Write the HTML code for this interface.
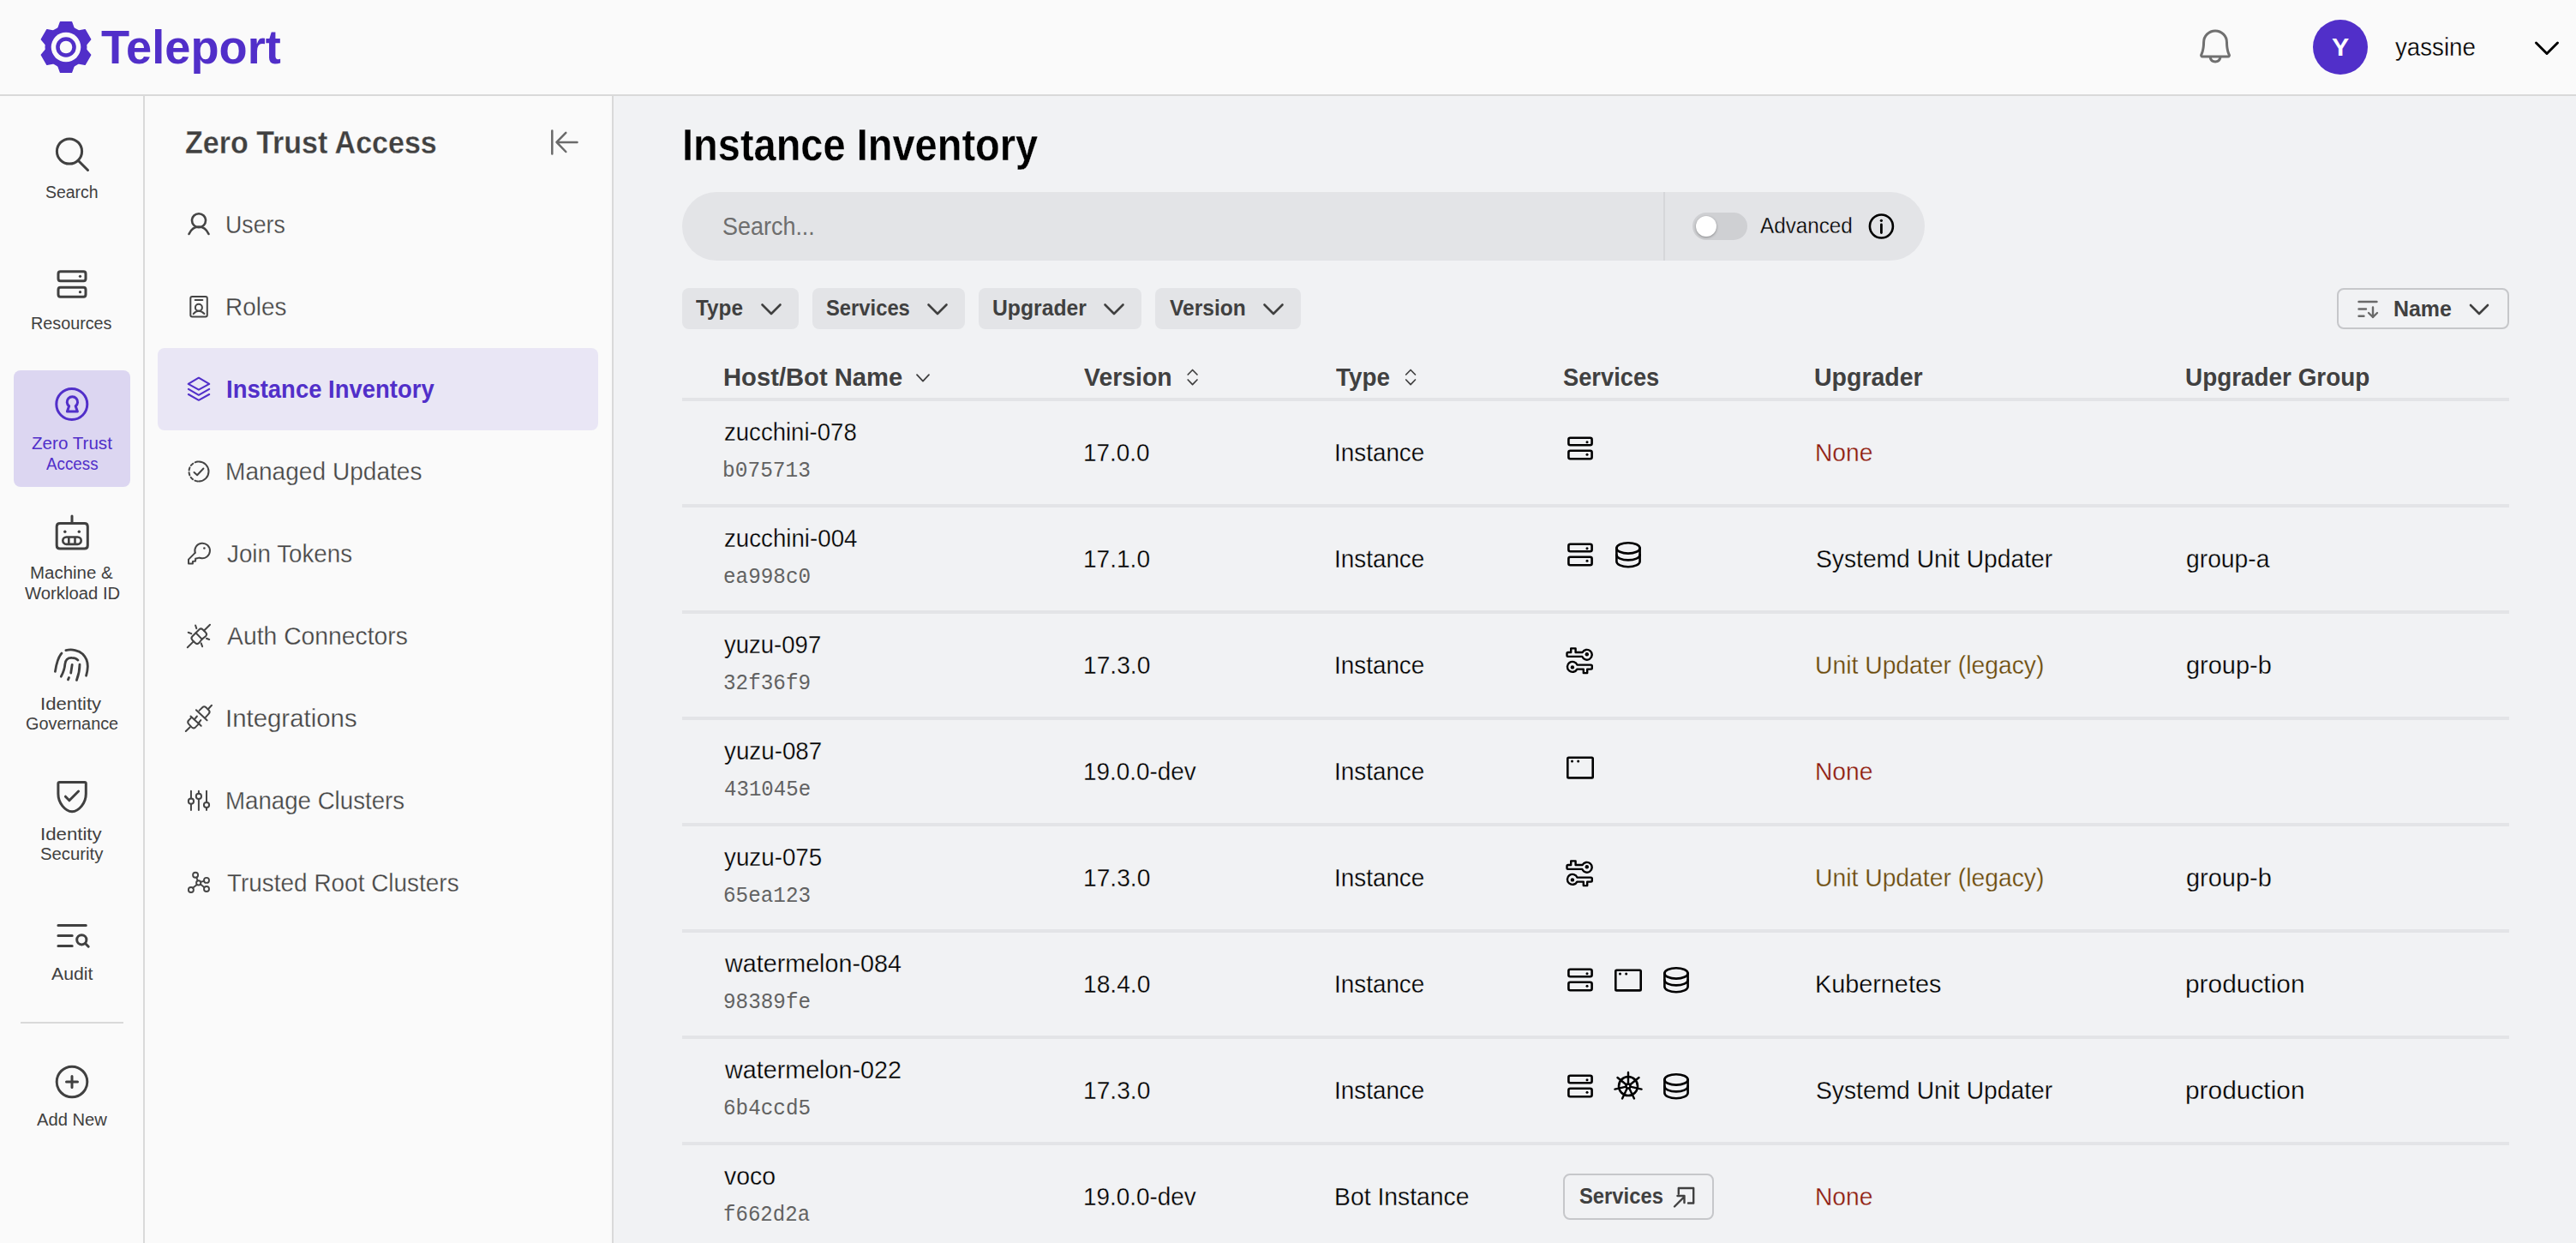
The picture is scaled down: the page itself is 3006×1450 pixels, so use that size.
<!DOCTYPE html>
<html><head><meta charset="utf-8"><title>Instance Inventory</title>
<style>
html,body{margin:0;padding:0;width:3006px;height:1450px;overflow:hidden;background:#F1F2F4;font-family:"Liberation Sans",sans-serif;}
.a{position:absolute;box-sizing:border-box;}
.t{position:absolute;white-space:nowrap;line-height:1;transform-origin:0 0;}
svg.i{position:absolute;overflow:visible;}
</style></head><body>
<div class="a" style="left:0px;top:0px;width:3006px;height:110px;background:#FAFAFA;"></div>
<div class="a" style="left:0px;top:110px;width:3006px;height:2px;background:#D9D9D9;"></div>
<div class="a" style="left:0px;top:112px;width:167px;height:1338px;background:#FAFAFA;"></div>
<div class="a" style="left:167px;top:112px;width:2px;height:1338px;background:#D9D9D9;"></div>
<div class="a" style="left:169px;top:112px;width:545px;height:1338px;background:#FAFAFA;"></div>
<div class="a" style="left:714px;top:112px;width:2px;height:1338px;background:#D9D9D9;"></div>
<div class="a" style="left:16px;top:432px;width:136px;height:136px;background:#DCD6F1;border-radius:8px;"></div>
<div class="a" style="left:24px;top:1192px;width:120px;height:2px;background:#D9D9D9;"></div>
<div class="a" style="left:184px;top:406px;width:514px;height:96px;background:#E9E6F5;border-radius:8px;"></div>
<div class="a" style="left:796px;top:224px;width:1450px;height:80px;background:#E3E4E7;border-radius:40px;"></div>
<div class="a" style="left:1941px;top:224px;width:2px;height:80px;background:#D6D7DA;"></div>
<div class="a" style="left:1975px;top:248px;width:64px;height:32px;background:#CFD0D3;border-radius:16px;"></div>
<div class="a" style="left:1979px;top:252px;width:24px;height:24px;background:#FFFFFF;border-radius:50%;box-shadow:0 1px 3px rgba(0,0,0,0.35);"></div>
<div class="a" style="left:796px;top:336px;width:136px;height:48px;background:#E3E4E7;border-radius:8px;"></div>
<div class="a" style="left:948px;top:336px;width:178px;height:48px;background:#E3E4E7;border-radius:8px;"></div>
<div class="a" style="left:1142px;top:336px;width:190px;height:48px;background:#E3E4E7;border-radius:8px;"></div>
<div class="a" style="left:1348px;top:336px;width:170px;height:48px;background:#E3E4E7;border-radius:8px;"></div>
<div class="a" style="left:2727px;top:336px;width:201px;height:48px;background:transparent;border:2px solid #C6C7CA;border-radius:8px;"></div>
<div class="a" style="left:796px;top:464px;width:2132px;height:4px;background:#E3E4E7;"></div>
<div class="a" style="left:796px;top:588px;width:2132px;height:4px;background:#E3E4E7;"></div>
<div class="a" style="left:796px;top:712px;width:2132px;height:4px;background:#E3E4E7;"></div>
<div class="a" style="left:796px;top:836px;width:2132px;height:4px;background:#E3E4E7;"></div>
<div class="a" style="left:796px;top:960px;width:2132px;height:4px;background:#E3E4E7;"></div>
<div class="a" style="left:796px;top:1084px;width:2132px;height:4px;background:#E3E4E7;"></div>
<div class="a" style="left:796px;top:1208px;width:2132px;height:4px;background:#E3E4E7;"></div>
<div class="a" style="left:796px;top:1332px;width:2132px;height:4px;background:#E3E4E7;"></div>
<div class="a" style="left:1824px;top:1369px;width:176px;height:54px;background:transparent;border:2px solid #C6C7CA;border-radius:8px;"></div>
<div class="a" style="left:2699px;top:22.7px;width:64px;height:64px;background:#512FC9;border-radius:50%;"></div>
<svg class="i" style="left:0;top:0" width="3006" height="1450" viewBox="0 0 3006 1450">
<path d="M67.82,33.37 L70.51,25.71 L83.49,25.71 L86.18,33.37 Z M91.14,36.23 L99.12,34.73 L105.61,45.98 L100.32,52.14 Z M100.32,57.86 L105.61,64.02 L99.12,75.27 L91.14,73.77 Z M86.18,76.63 L83.49,84.29 L70.51,84.29 L67.82,76.63 Z M62.86,73.77 L54.88,75.27 L48.39,64.02 L53.68,57.86 Z M53.68,52.14 L48.39,45.98 L54.88,34.73 L62.86,36.23 Z " fill="#512FC9" stroke="#512FC9" stroke-width="1.5" stroke-linecap="round" stroke-linejoin="round" />
<circle cx="77" cy="55" r="24.5" fill="#512FC9" stroke="none" stroke-width="0"/>
<circle cx="77" cy="55" r="17.3" fill="#FAFAFA" stroke="none" stroke-width="0"/>
<circle cx="77" cy="55" r="11.8" fill="#512FC9" stroke="none" stroke-width="0"/>
<circle cx="77" cy="55" r="7.3" fill="#FAFAFA" stroke="none" stroke-width="0"/>
<path transform="translate(2561.1,30.0) scale(0.187)" fill="#707070" d="M221.8,175.94C216.25,166.38,208,139.33,208,104a80,80,0,1,0-160,0c0,35.35-8.26,62.38-13.81,71.94A16,16,0,0,0,48,200H88.81a40,40,0,0,0,78.38,0H208a16,16,0,0,0,13.8-24.06ZM128,216a24,24,0,0,1-22.62-16h45.24A24,24,0,0,1,128,216ZM48,184c7.7-13.24,16-43.92,16-80a64,64,0,1,1,128,0c0,36.05,8.28,66.73,16,80Z"/>
<path d="M2959.5,50 L2972,62.5 L2984.5,50" fill="none" stroke="#000" stroke-width="3" stroke-linecap="round" stroke-linejoin="round" />
<circle cx="81" cy="176.5" r="14.6" fill="none" stroke="#404040" stroke-width="3"/>
<path d="M91.5,187.5 L102.5,198.5" fill="none" stroke="#404040" stroke-width="3" stroke-linecap="round" stroke-linejoin="round" />
<path d="M68,319.5 Q68,316.8 70.5,316.8 L97.5,316.8 Q100,316.8 100,319.5 L100,325 Q100,327.7 97.5,327.7 L70.5,327.7 Q68,327.7 68,325 Z" fill="none" stroke="#404040" stroke-width="3" stroke-linecap="round" stroke-linejoin="round" />
<path d="M68,338 Q68,335.2 70.5,335.2 L97.5,335.2 Q100,335.2 100,338 L100,343.5 Q100,346.2 97.5,346.2 L70.5,346.2 Q68,346.2 68,343.5 Z" fill="none" stroke="#404040" stroke-width="3" stroke-linecap="round" stroke-linejoin="round" />
<circle cx="93.5" cy="322.3" r="1.6" fill="#404040" stroke="none" stroke-width="0"/>
<circle cx="93.5" cy="340.7" r="1.6" fill="#404040" stroke="none" stroke-width="0"/>
<circle cx="83.8" cy="471.5" r="18" fill="none" stroke="#512FC9" stroke-width="3"/>
<path d="M80.6,473.8 A6.2,6.2 0 1 1 88.2,473.8 L90.4,480 L78.4,480 Z" fill="none" stroke="#512FC9" stroke-width="3" stroke-linecap="round" stroke-linejoin="round" />
<path d="M84,602 L84,609.5" fill="none" stroke="#404040" stroke-width="3" stroke-linecap="round" stroke-linejoin="round" />
<path d="M70,610.5 L98.5,610.5 Q102.3,610.5 102.3,614.3 L102.3,636.2 Q102.3,640 98.5,640 L70,640 Q66.2,640 66.2,636.2 L66.2,614.3 Q66.2,610.5 70,610.5 Z" fill="none" stroke="#404040" stroke-width="3" stroke-linecap="round" stroke-linejoin="round" />
<circle cx="75.8" cy="620.2" r="1.7" fill="#404040" stroke="none" stroke-width="0"/>
<circle cx="92.3" cy="620.2" r="1.7" fill="#404040" stroke="none" stroke-width="0"/>
<path d="M77.5,626.5 L90.5,626.5 A4.2,4.2 0 0 1 90.5,634.9 L77.5,634.9 A4.2,4.2 0 0 1 77.5,626.5 Z M80.3,626.5 L80.3,634.9 M87.5,626.5 L87.5,634.9" fill="none" stroke="#404040" stroke-width="2.6" stroke-linecap="round" stroke-linejoin="round" />
<path d="M64.4,783.4 C65.5,776 67.5,767 71.9,762.1" fill="none" stroke="#404040" stroke-width="2.8" stroke-linecap="round" stroke-linejoin="round" />
<path d="M76.9,758.6 C84,757 92,758.5 96.5,763 C101,767.5 102.5,773 102.3,778 C102.2,781.5 101.5,785 100.6,788.2" fill="none" stroke="#404040" stroke-width="2.8" stroke-linecap="round" stroke-linejoin="round" />
<path d="M71.3,789.2 C73.5,785 75.5,781 75.8,775 C76,770 79,767 83.8,767.3 C87,767.3 89.5,768.5 91,770.1" fill="none" stroke="#404040" stroke-width="2.8" stroke-linecap="round" stroke-linejoin="round" />
<path d="M84.2,775.3 L82.7,785" fill="none" stroke="#404040" stroke-width="2.8" stroke-linecap="round" stroke-linejoin="round" />
<path d="M93,775.1 C93,782 91.5,788 89.4,793.4" fill="none" stroke="#404040" stroke-width="2.8" stroke-linecap="round" stroke-linejoin="round" />
<path d="M80.5,790.4 L79.4,792.8" fill="none" stroke="#404040" stroke-width="2.8" stroke-linecap="round" stroke-linejoin="round" />
<path d="M69.5,912.5 L98.7,912.5 Q100.3,912.5 100.3,914.1 L100.3,926 C100.3,937 92,946.3 84.1,946.8 C76.2,946.3 67.9,937 67.9,926 L67.9,914.1 Q67.9,912.5 69.5,912.5 Z" fill="none" stroke="#404040" stroke-width="3" stroke-linecap="round" stroke-linejoin="round" />
<path d="M76.4,929.2 L80.9,933.8 L91.6,923" fill="none" stroke="#404040" stroke-width="3" stroke-linecap="round" stroke-linejoin="round" />
<path d="M67.9,1079.6 L100.3,1079.6 M67.9,1091.6 L84.2,1091.6 M67.9,1103.6 L84.2,1103.6" fill="none" stroke="#404040" stroke-width="3" stroke-linecap="round" stroke-linejoin="round" />
<circle cx="95.3" cy="1096.3" r="5.6" fill="none" stroke="#404040" stroke-width="3"/>
<path d="M99.5,1100.5 L103.2,1104.2" fill="none" stroke="#404040" stroke-width="3" stroke-linecap="round" stroke-linejoin="round" />
<circle cx="84" cy="1262" r="17.8" fill="none" stroke="#404040" stroke-width="3"/>
<path d="M84,1255.5 L84,1268.5 M77.5,1262 L90.5,1262" fill="none" stroke="#404040" stroke-width="3" stroke-linecap="round" stroke-linejoin="round" />
<circle cx="232" cy="257.2" r="8" fill="none" stroke="#454545" stroke-width="2.6"/>
<path d="M220.5,273 C223,267.5 227,264.5 232,264.5 C237,264.5 241,267.5 243.5,273" fill="none" stroke="#454545" stroke-width="2.6" stroke-linecap="round" stroke-linejoin="round" />
<path d="M224.3,346.1 L239.8,346.1 Q241.8,346.1 241.8,348.1 L241.8,367.6 Q241.8,369.6 239.8,369.6 L224.3,369.6 Q222.3,369.6 222.3,367.6 L222.3,348.1 Q222.3,346.1 224.3,346.1 Z" fill="none" stroke="#454545" stroke-width="2" stroke-linecap="round" stroke-linejoin="round" />
<path d="M227.7,350 L236.3,350" fill="none" stroke="#454545" stroke-width="2" stroke-linecap="round" stroke-linejoin="round" />
<circle cx="231.9" cy="358.7" r="4" fill="none" stroke="#454545" stroke-width="2"/>
<path d="M225.7,366.2 C227.5,364 229.5,362.8 231.9,362.8 C234.3,362.8 236.5,364 238.4,366" fill="none" stroke="#454545" stroke-width="2" stroke-linecap="round" stroke-linejoin="round" />
<path d="M231.9,440.7 L244.2,447.9 L231.9,454.7 L219.7,447.9 Z" fill="none" stroke="#512FC9" stroke-width="2.1" stroke-linecap="round" stroke-linejoin="round" />
<path d="M219.9,453.9 L231.9,460.8 L244.2,453.9" fill="none" stroke="#512FC9" stroke-width="2.1" stroke-linecap="round" stroke-linejoin="round" />
<path d="M219.9,460 L231.9,466.8 L244.2,460" fill="none" stroke="#512FC9" stroke-width="2.1" stroke-linecap="round" stroke-linejoin="round" />
<path d="M232,538.5 A11.5,11.5 0 0 1 232,561.5" fill="none" stroke="#454545" stroke-width="2" stroke-linecap="round" stroke-linejoin="round" />
<path d="M232,561.5 A11.5,11.5 0 0 1 232,538.5" fill="none" stroke="#454545" stroke-width="2" stroke-linecap="round" stroke-linejoin="round" stroke-dasharray="3.2 2.8" stroke-dashoffset="-1.5"/>
<path d="M226.5,551 L230.1,554.2 L237.4,546.5" fill="none" stroke="#454545" stroke-width="2" stroke-linecap="round" stroke-linejoin="round" />
<path d="M227.7,644.9 L220,652.6 L220,657.6 L224.9,657.6 L224.9,655 L228.1,654.6 L228.1,651.8 L232.5,650.6 L234.1,651" fill="none" stroke="#454545" stroke-width="2" stroke-linecap="round" stroke-linejoin="round" />
<path d="M227.7,644.9 A8.8,8.8 0 1 1 234.1,651" fill="none" stroke="#454545" stroke-width="2" stroke-linecap="round" stroke-linejoin="round" />
<circle cx="238.4" cy="639.5" r="1.3" fill="#454545" stroke="none" stroke-width="0"/>
<path d="M228.5,738.3 L232.3,734.5 Q234.5,732.3 236.7,734.5 L240,737.8 Q242.2,740 240,742.2 L235.7,745.6" fill="none" stroke="#454545" stroke-width="2" stroke-linecap="round" stroke-linejoin="round" />
<path d="M228.5,738.3 L224.5,742.3 Q222.3,744.5 224.5,746.7 L227.8,750 Q230,752.2 232.2,750 L235.7,745.6 Z" fill="none" stroke="#454545" stroke-width="2" stroke-linecap="round" stroke-linejoin="round" />
<path d="M238.2,735.5 L245,728.7 M225.7,748.4 L218.8,755.2" fill="none" stroke="#454545" stroke-width="2" stroke-linecap="round" stroke-linejoin="round" />
<path d="M228.1,729.5 L229.3,733.1 M219.7,737.7 L223.3,739.1 M241,744.8 L244.2,746 M234.7,750.4 L236.1,754.2" fill="none" stroke="#454545" stroke-width="2" stroke-linecap="round" stroke-linejoin="round" />
<path d="M216.8,853 L221.7,848.2 M242.6,827.5 L247,822.8" fill="none" stroke="#454545" stroke-width="2" stroke-linecap="round" stroke-linejoin="round" />
<path d="M222.5,835.5 L234.7,846.8" fill="none" stroke="#454545" stroke-width="2" stroke-linecap="round" stroke-linejoin="round" />
<path d="M223.3,837.1 L220.2,840.2 Q218.2,842.2 220.2,844.6 L223.8,848.4 Q225.8,850.4 228,848.4 L232.5,843.9" fill="none" stroke="#454545" stroke-width="2" stroke-linecap="round" stroke-linejoin="round" />
<path d="M226.9,839.1 L229.9,835.5 M231.5,843.6 L234.3,840.1" fill="none" stroke="#454545" stroke-width="2" stroke-linecap="round" stroke-linejoin="round" />
<path d="M228.9,828.3 L241.6,840.3" fill="none" stroke="#454545" stroke-width="2" stroke-linecap="round" stroke-linejoin="round" />
<path d="M232.5,828.9 L236.2,825.2 Q238.2,823.2 240.4,825.2 L243.6,828.4 Q245.6,830.4 243.6,832.6 L239.8,836.8" fill="none" stroke="#454545" stroke-width="2" stroke-linecap="round" stroke-linejoin="round" />
<path d="M222.95,922.7 L222.95,931.5 M222.95,938 L222.95,945 M231.9,922.7 L231.9,925.6 M231.9,932.2 L231.9,945 M241,922.7 L241,935.7 M241,942.3 L241,945" fill="none" stroke="#454545" stroke-width="2" stroke-linecap="round" stroke-linejoin="round" />
<circle cx="222.95" cy="934.7" r="3.1" fill="none" stroke="#454545" stroke-width="2"/>
<circle cx="231.9" cy="928.9" r="3.1" fill="none" stroke="#454545" stroke-width="2"/>
<circle cx="241" cy="939" r="3.1" fill="none" stroke="#454545" stroke-width="2"/>
<circle cx="228.1" cy="1020.7" r="3" fill="none" stroke="#454545" stroke-width="1.9"/>
<circle cx="241" cy="1026.9" r="3" fill="none" stroke="#454545" stroke-width="1.9"/>
<circle cx="241" cy="1037" r="3" fill="none" stroke="#454545" stroke-width="1.9"/>
<circle cx="222.9" cy="1038" r="3" fill="none" stroke="#454545" stroke-width="1.9"/>
<circle cx="231.7" cy="1029.9" r="2.6" fill="none" stroke="#454545" stroke-width="1.9"/>
<path d="M229.3,1023.5 L230.6,1027.3 M234.3,1028.8 L238.2,1027.6 M234,1031.6 L238.5,1035.2 M229.8,1032 L225,1035.8" fill="none" stroke="#454545" stroke-width="1.9" stroke-linecap="round" stroke-linejoin="round" />
<path d="M644.3,152.5 L644.3,179.5 M673.5,165.9 L650,165.9 M660.3,154.8 L649.5,165.9 L660.3,177" fill="none" stroke="#6A6A6A" stroke-width="2.5" stroke-linecap="round" stroke-linejoin="round" />
<path d="M889.5,355.5 L900,366 L910.5,355.5" fill="none" stroke="#404040" stroke-width="2.6" stroke-linecap="round" stroke-linejoin="round" />
<path d="M1083.5,355.5 L1094,366 L1104.5,355.5" fill="none" stroke="#404040" stroke-width="2.6" stroke-linecap="round" stroke-linejoin="round" />
<path d="M1289.5,355.5 L1300,366 L1310.5,355.5" fill="none" stroke="#404040" stroke-width="2.6" stroke-linecap="round" stroke-linejoin="round" />
<path d="M1475.5,355.5 L1486,366 L1496.5,355.5" fill="none" stroke="#404040" stroke-width="2.6" stroke-linecap="round" stroke-linejoin="round" />
<circle cx="2195.4" cy="264" r="13.5" fill="none" stroke="#000" stroke-width="2.6"/>
<path d="M2195.4,262 L2195.4,271.5" fill="none" stroke="#000" stroke-width="2.8" stroke-linecap="round" stroke-linejoin="round" />
<circle cx="2195.4" cy="257.3" r="1.6" fill="#000" stroke="none" stroke-width="0"/>
<path d="M2752.5,352 L2773.5,352 M2752.5,360.5 L2761,360.5 M2752.5,368.7 L2758.5,368.7 M2769,358.5 L2769,370 M2764,365 L2769,370 L2774,365" fill="none" stroke="#6A6A6A" stroke-width="2.4" stroke-linecap="round" stroke-linejoin="round" />
<path d="M2883,356 L2893,366 L2903,356" fill="none" stroke="#404040" stroke-width="2.6" stroke-linecap="round" stroke-linejoin="round" />
<path d="M1070,437.2 L1077,444.6 L1084,437.2" fill="none" stroke="#404040" stroke-width="1.8" stroke-linecap="round" stroke-linejoin="round" />
<path d="M1386.2,437 L1391.6,431.5 L1397,437 M1386.2,443 L1391.6,448.6 L1397,443" fill="none" stroke="#404040" stroke-width="1.7" stroke-linecap="round" stroke-linejoin="round" />
<path d="M1640.7,437 L1646.1,431.5 L1651.5,437 M1640.7,443 L1646.1,448.6 L1651.5,443" fill="none" stroke="#404040" stroke-width="1.7" stroke-linecap="round" stroke-linejoin="round" />
<path d="M1832.4,510.7 L1855.6,510.7 Q1857.6,510.7 1857.6,512.7 L1857.6,517.3 Q1857.6,519.3 1855.6,519.3 L1832.4,519.3 Q1830.4,519.3 1830.4,517.3 L1830.4,512.7 Q1830.4,510.7 1832.4,510.7 Z" fill="none" stroke="#000" stroke-width="2.6" stroke-linecap="round" stroke-linejoin="round" />
<circle cx="1852" cy="515.8" r="1.5" fill="#000" stroke="none" stroke-width="0"/>
<path d="M1832.4,525.8 L1855.6,525.8 Q1857.6,525.8 1857.6,527.8 L1857.6,533.3 Q1857.6,535.3 1855.6,535.3 L1832.4,535.3 Q1830.4,535.3 1830.4,533.3 L1830.4,527.8 Q1830.4,525.8 1832.4,525.8 Z" fill="none" stroke="#000" stroke-width="2.6" stroke-linecap="round" stroke-linejoin="round" />
<circle cx="1852" cy="530.3" r="1.5" fill="#000" stroke="none" stroke-width="0"/>
<path d="M1832.4,634.7 L1855.6,634.7 Q1857.6,634.7 1857.6,636.7 L1857.6,641.3 Q1857.6,643.3 1855.6,643.3 L1832.4,643.3 Q1830.4,643.3 1830.4,641.3 L1830.4,636.7 Q1830.4,634.7 1832.4,634.7 Z" fill="none" stroke="#000" stroke-width="2.6" stroke-linecap="round" stroke-linejoin="round" />
<circle cx="1852" cy="639.8" r="1.5" fill="#000" stroke="none" stroke-width="0"/>
<path d="M1832.4,649.8 L1855.6,649.8 Q1857.6,649.8 1857.6,651.8 L1857.6,657.3 Q1857.6,659.3 1855.6,659.3 L1832.4,659.3 Q1830.4,659.3 1830.4,657.3 L1830.4,651.8 Q1830.4,649.8 1832.4,649.8 Z" fill="none" stroke="#000" stroke-width="2.6" stroke-linecap="round" stroke-linejoin="round" />
<circle cx="1852" cy="654.3" r="1.5" fill="#000" stroke="none" stroke-width="0"/>
<ellipse cx="1900" cy="639.4" rx="13.6" ry="6.2" fill="none" stroke="#000" stroke-width="2.6"/>
<path d="M1886.4,639.4 L1886.4,655 A13.6,6.2 0 0 0 1913.6,655 L1913.6,639.4" fill="none" stroke="#000" stroke-width="2.6" stroke-linecap="round" stroke-linejoin="round" />
<path d="M1886.4,647.2 A13.6,6.2 0 0 0 1913.6,647.2" fill="none" stroke="#000" stroke-width="2.6" stroke-linecap="round" stroke-linejoin="round" />
<g transform="translate(0,0)">
<path d="M1846.6,761 L1838.6,761 L1838.6,756.4 L1833.2,756.4 L1833.2,761 L1829.8,761 Q1828.5,761 1828.5,762.4 L1828.5,764.6 Q1828.5,765.9 1829.8,765.9 L1846.3,765.9 A5.9,5.9 0 1 0 1846.6,761" fill="none" stroke="#000" stroke-width="2.4" stroke-linecap="round" stroke-linejoin="round" />
<path d="M1840.5,775.6 L1856.5,775.6 Q1857.8,775.6 1857.8,777 L1857.8,779.3 Q1857.8,780.6 1856.5,780.6 L1852.2,780.6 L1852.2,785.1 L1847.8,785.1 L1847.8,780.6 L1840.3,780.6 A6,6 0 1 1 1840.5,775.6" fill="none" stroke="#000" stroke-width="2.4" stroke-linecap="round" stroke-linejoin="round" />
<circle cx="1851.8" cy="763.3" r="2.2" fill="#000" stroke="none" stroke-width="0"/>
<circle cx="1834.9" cy="778.4" r="2.2" fill="#000" stroke="none" stroke-width="0"/>
</g>
<path d="M1830.5,883.8 L1857.5,883.8 Q1858.7,883.8 1858.7,885 L1858.7,906.2 Q1858.7,907.4 1857.5,907.4 L1830.5,907.4 Q1829.3,907.4 1829.3,906.2 L1829.3,885 Q1829.3,883.8 1830.5,883.8 Z" fill="none" stroke="#000" stroke-width="2.6" stroke-linecap="round" stroke-linejoin="round" />
<circle cx="1834.5" cy="888.1" r="1.5" fill="#000" stroke="none" stroke-width="0"/>
<circle cx="1841.7" cy="888.1" r="1.5" fill="#000" stroke="none" stroke-width="0"/>
<g transform="translate(0,248)">
<path d="M1846.6,761 L1838.6,761 L1838.6,756.4 L1833.2,756.4 L1833.2,761 L1829.8,761 Q1828.5,761 1828.5,762.4 L1828.5,764.6 Q1828.5,765.9 1829.8,765.9 L1846.3,765.9 A5.9,5.9 0 1 0 1846.6,761" fill="none" stroke="#000" stroke-width="2.4" stroke-linecap="round" stroke-linejoin="round" />
<path d="M1840.5,775.6 L1856.5,775.6 Q1857.8,775.6 1857.8,777 L1857.8,779.3 Q1857.8,780.6 1856.5,780.6 L1852.2,780.6 L1852.2,785.1 L1847.8,785.1 L1847.8,780.6 L1840.3,780.6 A6,6 0 1 1 1840.5,775.6" fill="none" stroke="#000" stroke-width="2.4" stroke-linecap="round" stroke-linejoin="round" />
<circle cx="1851.8" cy="763.3" r="2.2" fill="#000" stroke="none" stroke-width="0"/>
<circle cx="1834.9" cy="778.4" r="2.2" fill="#000" stroke="none" stroke-width="0"/>
</g>
<path d="M1832.4,1130.7 L1855.6,1130.7 Q1857.6,1130.7 1857.6,1132.7 L1857.6,1137.3 Q1857.6,1139.3 1855.6,1139.3 L1832.4,1139.3 Q1830.4,1139.3 1830.4,1137.3 L1830.4,1132.7 Q1830.4,1130.7 1832.4,1130.7 Z" fill="none" stroke="#000" stroke-width="2.6" stroke-linecap="round" stroke-linejoin="round" />
<circle cx="1852" cy="1135.8" r="1.5" fill="#000" stroke="none" stroke-width="0"/>
<path d="M1832.4,1145.8 L1855.6,1145.8 Q1857.6,1145.8 1857.6,1147.8 L1857.6,1153.3 Q1857.6,1155.3 1855.6,1155.3 L1832.4,1155.3 Q1830.4,1155.3 1830.4,1153.3 L1830.4,1147.8 Q1830.4,1145.8 1832.4,1145.8 Z" fill="none" stroke="#000" stroke-width="2.6" stroke-linecap="round" stroke-linejoin="round" />
<circle cx="1852" cy="1150.3" r="1.5" fill="#000" stroke="none" stroke-width="0"/>
<path d="M1886.5,1131.8 L1913.5,1131.8 Q1914.7,1131.8 1914.7,1133 L1914.7,1154.2 Q1914.7,1155.4 1913.5,1155.4 L1886.5,1155.4 Q1885.3,1155.4 1885.3,1154.2 L1885.3,1133 Q1885.3,1131.8 1886.5,1131.8 Z" fill="none" stroke="#000" stroke-width="2.6" stroke-linecap="round" stroke-linejoin="round" />
<circle cx="1890.5" cy="1136.1" r="1.5" fill="#000" stroke="none" stroke-width="0"/>
<circle cx="1897.7" cy="1136.1" r="1.5" fill="#000" stroke="none" stroke-width="0"/>
<ellipse cx="1956" cy="1135.4" rx="13.6" ry="6.2" fill="none" stroke="#000" stroke-width="2.6"/>
<path d="M1942.4,1135.4 L1942.4,1151 A13.6,6.2 0 0 0 1969.6,1151 L1969.6,1135.4" fill="none" stroke="#000" stroke-width="2.6" stroke-linecap="round" stroke-linejoin="round" />
<path d="M1942.4,1143.2 A13.6,6.2 0 0 0 1969.6,1143.2" fill="none" stroke="#000" stroke-width="2.6" stroke-linecap="round" stroke-linejoin="round" />
<path d="M1832.4,1254.7 L1855.6,1254.7 Q1857.6,1254.7 1857.6,1256.7 L1857.6,1261.3 Q1857.6,1263.3 1855.6,1263.3 L1832.4,1263.3 Q1830.4,1263.3 1830.4,1261.3 L1830.4,1256.7 Q1830.4,1254.7 1832.4,1254.7 Z" fill="none" stroke="#000" stroke-width="2.6" stroke-linecap="round" stroke-linejoin="round" />
<circle cx="1852" cy="1259.8" r="1.5" fill="#000" stroke="none" stroke-width="0"/>
<path d="M1832.4,1269.8 L1855.6,1269.8 Q1857.6,1269.8 1857.6,1271.8 L1857.6,1277.3 Q1857.6,1279.3 1855.6,1279.3 L1832.4,1279.3 Q1830.4,1279.3 1830.4,1277.3 L1830.4,1271.8 Q1830.4,1269.8 1832.4,1269.8 Z" fill="none" stroke="#000" stroke-width="2.6" stroke-linecap="round" stroke-linejoin="round" />
<circle cx="1852" cy="1274.3" r="1.5" fill="#000" stroke="none" stroke-width="0"/>
<circle cx="1900" cy="1267" r="11" fill="none" stroke="#000" stroke-width="2.6"/>
<path d="M1900,1264.5 L1900,1251" fill="none" stroke="#000" stroke-width="2.4" stroke-linecap="round" stroke-linejoin="round" />
<path d="M1901.95,1265.44 L1912.51,1257.02" fill="none" stroke="#000" stroke-width="2.4" stroke-linecap="round" stroke-linejoin="round" />
<path d="M1902.44,1267.56 L1915.6,1270.56" fill="none" stroke="#000" stroke-width="2.4" stroke-linecap="round" stroke-linejoin="round" />
<path d="M1901.08,1269.25 L1906.94,1281.42" fill="none" stroke="#000" stroke-width="2.4" stroke-linecap="round" stroke-linejoin="round" />
<path d="M1898.92,1269.25 L1893.06,1281.42" fill="none" stroke="#000" stroke-width="2.4" stroke-linecap="round" stroke-linejoin="round" />
<path d="M1897.56,1267.56 L1884.4,1270.56" fill="none" stroke="#000" stroke-width="2.4" stroke-linecap="round" stroke-linejoin="round" />
<path d="M1898.05,1265.44 L1887.49,1257.02" fill="none" stroke="#000" stroke-width="2.4" stroke-linecap="round" stroke-linejoin="round" />
<circle cx="1900" cy="1267" r="2.6" fill="none" stroke="#000" stroke-width="2.2"/>
<ellipse cx="1956" cy="1259.4" rx="13.6" ry="6.2" fill="none" stroke="#000" stroke-width="2.6"/>
<path d="M1942.4,1259.4 L1942.4,1275 A13.6,6.2 0 0 0 1969.6,1275 L1969.6,1259.4" fill="none" stroke="#000" stroke-width="2.6" stroke-linecap="round" stroke-linejoin="round" />
<path d="M1942.4,1267.2 A13.6,6.2 0 0 0 1969.6,1267.2" fill="none" stroke="#000" stroke-width="2.6" stroke-linecap="round" stroke-linejoin="round" />
<path d="M1958.8,1392.5 L1958.8,1386 L1976.2,1386 L1976.2,1403.5 L1970,1403.5 M1954,1407.5 L1965.5,1396 M1957.5,1395 L1965.5,1395 L1965.5,1403" fill="none" stroke="#404040" stroke-width="2.4" stroke-linecap="round" stroke-linejoin="round" />
</svg>
<div class="t" id="t0" style="left:118.02px;top:28.31px;font-size:55.50px;font-weight:700;color:#512FC9;font-family:'Liberation Sans', sans-serif;transform:scaleX(0.9765);">Teleport</div>
<div class="t" id="t1" style="left:2720.99px;top:39.90px;font-size:30.00px;font-weight:700;color:#fff;font-family:'Liberation Sans', sans-serif;transform:scaleX(1.0105);">Y</div>
<div class="t" id="t2" style="left:2794.63px;top:40.75px;font-size:29.00px;font-weight:400;color:#000;font-family:'Liberation Sans', sans-serif;transform:scaleX(0.9552);-webkit-text-stroke:0.3px #FAFAFA;">yassine</div>
<div class="t" id="t3" style="left:53.38px;top:214.37px;font-size:20.00px;font-weight:400;color:#404040;font-family:'Liberation Sans', sans-serif;transform:scaleX(0.9721);">Search</div>
<div class="t" id="t4" style="left:36.07px;top:366.87px;font-size:20.00px;font-weight:400;color:#404040;font-family:'Liberation Sans', sans-serif;transform:scaleX(0.9882);">Resources</div>
<div class="t" id="t5" style="left:36.62px;top:506.57px;font-size:20.00px;font-weight:400;color:#512FC9;font-family:'Liberation Sans', sans-serif;transform:scaleX(1.0300);">Zero Trust</div>
<div class="t" id="t6" style="left:53.95px;top:530.57px;font-size:20.00px;font-weight:400;color:#512FC9;font-family:'Liberation Sans', sans-serif;transform:scaleX(0.9391);">Access</div>
<div class="t" id="t7" style="left:34.90px;top:658.17px;font-size:20.00px;font-weight:400;color:#404040;font-family:'Liberation Sans', sans-serif;transform:scaleX(1.0228);">Machine &amp;</div>
<div class="t" id="t8" style="left:28.75px;top:681.77px;font-size:20.00px;font-weight:400;color:#404040;font-family:'Liberation Sans', sans-serif;transform:scaleX(1.0138);">Workload ID</div>
<div class="t" id="t9" style="left:47.04px;top:810.87px;font-size:20.00px;font-weight:400;color:#404040;font-family:'Liberation Sans', sans-serif;transform:scaleX(1.1032);">Identity</div>
<div class="t" id="t10" style="left:29.91px;top:833.87px;font-size:20.00px;font-weight:400;color:#404040;font-family:'Liberation Sans', sans-serif;transform:scaleX(0.9925);">Governance</div>
<div class="t" id="t11" style="left:46.78px;top:962.57px;font-size:20.00px;font-weight:400;color:#404040;font-family:'Liberation Sans', sans-serif;transform:scaleX(1.1111);">Identity</div>
<div class="t" id="t12" style="left:46.93px;top:985.87px;font-size:20.00px;font-weight:400;color:#404040;font-family:'Liberation Sans', sans-serif;transform:scaleX(1.0155);">Security</div>
<div class="t" id="t13" style="left:59.60px;top:1125.87px;font-size:20.00px;font-weight:400;color:#404040;font-family:'Liberation Sans', sans-serif;transform:scaleX(1.0609);">Audit</div>
<div class="t" id="t14" style="left:43.15px;top:1296.27px;font-size:20.00px;font-weight:400;color:#404040;font-family:'Liberation Sans', sans-serif;transform:scaleX(1.0086);">Add New</div>
<div class="t" id="t15" style="left:215.89px;top:148.37px;font-size:37.00px;font-weight:700;color:#404040;font-family:'Liberation Sans', sans-serif;transform:scaleX(0.9196);-webkit-text-stroke:0.3px #FAFAFA;">Zero Trust Access</div>
<div class="t" id="t16" style="left:263.19px;top:247.95px;font-size:29.00px;font-weight:400;color:#454545;font-family:'Liberation Sans', sans-serif;transform:scaleX(0.9222);-webkit-text-stroke:0.3px #FAFAFA;">Users</div>
<div class="t" id="t17" style="left:263.09px;top:343.95px;font-size:29.00px;font-weight:400;color:#454545;font-family:'Liberation Sans', sans-serif;transform:scaleX(0.9631);-webkit-text-stroke:0.3px #FAFAFA;">Roles</div>
<div class="t" id="t18" style="left:264.08px;top:439.95px;font-size:29.00px;font-weight:700;color:#512FC9;font-family:'Liberation Sans', sans-serif;transform:scaleX(0.9471);">Instance Inventory</div>
<div class="t" id="t19" style="left:263.08px;top:535.95px;font-size:29.00px;font-weight:400;color:#454545;font-family:'Liberation Sans', sans-serif;transform:scaleX(0.9682);-webkit-text-stroke:0.3px #FAFAFA;">Managed Updates</div>
<div class="t" id="t20" style="left:265.02px;top:631.95px;font-size:29.00px;font-weight:400;color:#454545;font-family:'Liberation Sans', sans-serif;transform:scaleX(0.9576);-webkit-text-stroke:0.3px #FAFAFA;">Join Tokens</div>
<div class="t" id="t21" style="left:265.01px;top:727.95px;font-size:29.00px;font-weight:400;color:#454545;font-family:'Liberation Sans', sans-serif;transform:scaleX(0.9766);-webkit-text-stroke:0.3px #FAFAFA;">Auth Connectors</div>
<div class="t" id="t22" style="left:262.97px;top:823.95px;font-size:29.00px;font-weight:400;color:#454545;font-family:'Liberation Sans', sans-serif;transform:scaleX(1.0135);-webkit-text-stroke:0.3px #FAFAFA;">Integrations</div>
<div class="t" id="t23" style="left:263.12px;top:919.95px;font-size:29.00px;font-weight:400;color:#454545;font-family:'Liberation Sans', sans-serif;transform:scaleX(0.9537);-webkit-text-stroke:0.3px #FAFAFA;">Manage Clusters</div>
<div class="t" id="t24" style="left:265.02px;top:1015.95px;font-size:29.00px;font-weight:400;color:#454545;font-family:'Liberation Sans', sans-serif;transform:scaleX(0.9631);-webkit-text-stroke:0.3px #FAFAFA;">Trusted Root Clusters</div>
<div class="t" id="t25" style="left:795.66px;top:144.22px;font-size:51.00px;font-weight:700;color:#000;font-family:'Liberation Sans', sans-serif;transform:scaleX(0.9213);-webkit-text-stroke:0.3px #F1F2F4;">Instance Inventory</div>
<div class="t" id="t26" style="left:843.15px;top:249.40px;font-size:30.00px;font-weight:400;color:#6E6E6E;font-family:'Liberation Sans', sans-serif;transform:scaleX(0.8983);">Search...</div>
<div class="t" id="t27" style="left:2054.47px;top:250.36px;font-size:26.50px;font-weight:400;color:#000;font-family:'Liberation Sans', sans-serif;transform:scaleX(0.9148);-webkit-text-stroke:0.3px #E3E4E7;">Advanced</div>
<div class="t" id="t28" style="left:812.00px;top:347.03px;font-size:25.00px;font-weight:700;color:#404040;font-family:'Liberation Sans', sans-serif;transform:scaleX(0.9732);">Type</div>
<div class="t" id="t29" style="left:964.02px;top:347.03px;font-size:25.00px;font-weight:700;color:#404040;font-family:'Liberation Sans', sans-serif;transform:scaleX(0.9510);">Services</div>
<div class="t" id="t30" style="left:1157.61px;top:347.03px;font-size:25.00px;font-weight:700;color:#404040;font-family:'Liberation Sans', sans-serif;transform:scaleX(0.9882);">Upgrader</div>
<div class="t" id="t31" style="left:1365.00px;top:347.03px;font-size:25.00px;font-weight:700;color:#404040;font-family:'Liberation Sans', sans-serif;transform:scaleX(0.9831);">Version</div>
<div class="t" id="t32" style="left:2793.01px;top:347.53px;font-size:25.00px;font-weight:700;color:#404040;font-family:'Liberation Sans', sans-serif;transform:scaleX(0.9969);">Name</div>
<div class="t" id="t33" style="left:843.59px;top:426.05px;font-size:29.00px;font-weight:700;color:#404040;font-family:'Liberation Sans', sans-serif;transform:scaleX(1.0068);">Host/Bot Name</div>
<div class="t" id="t34" style="left:1265.00px;top:426.05px;font-size:29.00px;font-weight:700;color:#404040;font-family:'Liberation Sans', sans-serif;transform:scaleX(0.9796);">Version</div>
<div class="t" id="t35" style="left:1559.22px;top:426.05px;font-size:29.00px;font-weight:700;color:#404040;font-family:'Liberation Sans', sans-serif;transform:scaleX(0.9594);">Type</div>
<div class="t" id="t36" style="left:1823.64px;top:426.05px;font-size:29.00px;font-weight:700;color:#404040;font-family:'Liberation Sans', sans-serif;transform:scaleX(0.9407);">Services</div>
<div class="t" id="t37" style="left:2116.63px;top:426.05px;font-size:29.00px;font-weight:700;color:#404040;font-family:'Liberation Sans', sans-serif;transform:scaleX(0.9827);">Upgrader</div>
<div class="t" id="t38" style="left:2549.88px;top:426.05px;font-size:29.00px;font-weight:700;color:#404040;font-family:'Liberation Sans', sans-serif;transform:scaleX(0.9611);">Upgrader Group</div>
<div class="t" id="t39" style="left:844.63px;top:489.95px;font-size:29.00px;font-weight:400;color:#000;font-family:'Liberation Sans', sans-serif;transform:scaleX(0.9503);-webkit-text-stroke:0.3px #F1F2F4;">zucchini-078</div>
<div class="t" id="t40" style="left:842.80px;top:536.20px;font-size:26.50px;font-weight:400;color:#626262;font-family:'Liberation Mono', monospace;transform:scaleX(0.9252);">b075713</div>
<div class="t" id="t41" style="left:1263.90px;top:513.95px;font-size:29.00px;font-weight:400;color:#000;font-family:'Liberation Sans', sans-serif;transform:scaleX(0.9623);-webkit-text-stroke:0.3px #F1F2F4;">17.0.0</div>
<div class="t" id="t42" style="left:1557.30px;top:513.95px;font-size:29.00px;font-weight:400;color:#000;font-family:'Liberation Sans', sans-serif;transform:scaleX(0.9604);-webkit-text-stroke:0.3px #F1F2F4;">Instance</div>
<div class="t" id="t43" style="left:2117.66px;top:513.95px;font-size:29.00px;font-weight:400;color:#8E1A0C;font-family:'Liberation Sans', sans-serif;transform:scaleX(0.9712);-webkit-text-stroke:0.3px #F1F2F4;">None</div>
<div class="t" id="t44" style="left:844.63px;top:613.95px;font-size:29.00px;font-weight:400;color:#000;font-family:'Liberation Sans', sans-serif;transform:scaleX(0.9547);-webkit-text-stroke:0.3px #F1F2F4;">zucchini-004</div>
<div class="t" id="t45" style="left:843.74px;top:660.20px;font-size:26.50px;font-weight:400;color:#626262;font-family:'Liberation Mono', monospace;transform:scaleX(0.9167);">ea998c0</div>
<div class="t" id="t46" style="left:1263.88px;top:637.95px;font-size:29.00px;font-weight:400;color:#000;font-family:'Liberation Sans', sans-serif;transform:scaleX(0.9675);-webkit-text-stroke:0.3px #F1F2F4;">17.1.0</div>
<div class="t" id="t47" style="left:1557.30px;top:637.95px;font-size:29.00px;font-weight:400;color:#000;font-family:'Liberation Sans', sans-serif;transform:scaleX(0.9604);-webkit-text-stroke:0.3px #F1F2F4;">Instance</div>
<div class="t" id="t48" style="left:2118.63px;top:637.95px;font-size:29.00px;font-weight:400;color:#000;font-family:'Liberation Sans', sans-serif;transform:scaleX(0.9734);-webkit-text-stroke:0.3px #F1F2F4;">Systemd Unit Updater</div>
<div class="t" id="t49" style="left:2551.03px;top:637.95px;font-size:29.00px;font-weight:400;color:#000;font-family:'Liberation Sans', sans-serif;transform:scaleX(0.9747);-webkit-text-stroke:0.3px #F1F2F4;">group-a</div>
<div class="t" id="t50" style="left:844.64px;top:737.95px;font-size:29.00px;font-weight:400;color:#000;font-family:'Liberation Sans', sans-serif;transform:scaleX(0.9487);-webkit-text-stroke:0.3px #F1F2F4;">yuzu-097</div>
<div class="t" id="t51" style="left:843.74px;top:784.20px;font-size:26.50px;font-weight:400;color:#626262;font-family:'Liberation Mono', monospace;transform:scaleX(0.9167);">32f36f9</div>
<div class="t" id="t52" style="left:1263.87px;top:761.95px;font-size:29.00px;font-weight:400;color:#000;font-family:'Liberation Sans', sans-serif;transform:scaleX(0.9714);-webkit-text-stroke:0.3px #F1F2F4;">17.3.0</div>
<div class="t" id="t53" style="left:1557.30px;top:761.95px;font-size:29.00px;font-weight:400;color:#000;font-family:'Liberation Sans', sans-serif;transform:scaleX(0.9604);-webkit-text-stroke:0.3px #F1F2F4;">Instance</div>
<div class="t" id="t54" style="left:2117.65px;top:761.95px;font-size:29.00px;font-weight:400;color:#6B4A0A;font-family:'Liberation Sans', sans-serif;transform:scaleX(0.9759);-webkit-text-stroke:0.3px #F1F2F4;">Unit Updater (legacy)</div>
<div class="t" id="t55" style="left:2551.00px;top:761.95px;font-size:29.00px;font-weight:400;color:#000;font-family:'Liberation Sans', sans-serif;transform:scaleX(0.9990);-webkit-text-stroke:0.3px #F1F2F4;">group-b</div>
<div class="t" id="t56" style="left:844.63px;top:861.95px;font-size:29.00px;font-weight:400;color:#000;font-family:'Liberation Sans', sans-serif;transform:scaleX(0.9573);-webkit-text-stroke:0.3px #F1F2F4;">yuzu-087</div>
<div class="t" id="t57" style="left:844.66px;top:908.20px;font-size:26.50px;font-weight:400;color:#626262;font-family:'Liberation Mono', monospace;transform:scaleX(0.9083);">431045e</div>
<div class="t" id="t58" style="left:1263.90px;top:885.95px;font-size:29.00px;font-weight:400;color:#000;font-family:'Liberation Sans', sans-serif;transform:scaleX(0.9619);-webkit-text-stroke:0.3px #F1F2F4;">19.0.0-dev</div>
<div class="t" id="t59" style="left:1557.30px;top:885.95px;font-size:29.00px;font-weight:400;color:#000;font-family:'Liberation Sans', sans-serif;transform:scaleX(0.9604);-webkit-text-stroke:0.3px #F1F2F4;">Instance</div>
<div class="t" id="t60" style="left:2117.66px;top:885.95px;font-size:29.00px;font-weight:400;color:#8E1A0C;font-family:'Liberation Sans', sans-serif;transform:scaleX(0.9712);-webkit-text-stroke:0.3px #F1F2F4;">None</div>
<div class="t" id="t61" style="left:844.63px;top:985.95px;font-size:29.00px;font-weight:400;color:#000;font-family:'Liberation Sans', sans-serif;transform:scaleX(0.9573);-webkit-text-stroke:0.3px #F1F2F4;">yuzu-075</div>
<div class="t" id="t62" style="left:843.74px;top:1032.20px;font-size:26.50px;font-weight:400;color:#626262;font-family:'Liberation Mono', monospace;transform:scaleX(0.9167);">65ea123</div>
<div class="t" id="t63" style="left:1263.87px;top:1009.95px;font-size:29.00px;font-weight:400;color:#000;font-family:'Liberation Sans', sans-serif;transform:scaleX(0.9714);-webkit-text-stroke:0.3px #F1F2F4;">17.3.0</div>
<div class="t" id="t64" style="left:1557.30px;top:1009.95px;font-size:29.00px;font-weight:400;color:#000;font-family:'Liberation Sans', sans-serif;transform:scaleX(0.9604);-webkit-text-stroke:0.3px #F1F2F4;">Instance</div>
<div class="t" id="t65" style="left:2117.65px;top:1009.95px;font-size:29.00px;font-weight:400;color:#6B4A0A;font-family:'Liberation Sans', sans-serif;transform:scaleX(0.9759);-webkit-text-stroke:0.3px #F1F2F4;">Unit Updater (legacy)</div>
<div class="t" id="t66" style="left:2551.00px;top:1009.95px;font-size:29.00px;font-weight:400;color:#000;font-family:'Liberation Sans', sans-serif;transform:scaleX(0.9990);-webkit-text-stroke:0.3px #F1F2F4;">group-b</div>
<div class="t" id="t67" style="left:845.60px;top:1109.95px;font-size:29.00px;font-weight:400;color:#000;font-family:'Liberation Sans', sans-serif;transform:scaleX(0.9903);-webkit-text-stroke:0.3px #F1F2F4;">watermelon-084</div>
<div class="t" id="t68" style="left:843.74px;top:1156.20px;font-size:26.50px;font-weight:400;color:#626262;font-family:'Liberation Mono', monospace;transform:scaleX(0.9167);">98389fe</div>
<div class="t" id="t69" style="left:1263.87px;top:1133.95px;font-size:29.00px;font-weight:400;color:#000;font-family:'Liberation Sans', sans-serif;transform:scaleX(0.9714);-webkit-text-stroke:0.3px #F1F2F4;">18.4.0</div>
<div class="t" id="t70" style="left:1557.30px;top:1133.95px;font-size:29.00px;font-weight:400;color:#000;font-family:'Liberation Sans', sans-serif;transform:scaleX(0.9604);-webkit-text-stroke:0.3px #F1F2F4;">Instance</div>
<div class="t" id="t71" style="left:2117.62px;top:1133.95px;font-size:29.00px;font-weight:400;color:#000;font-family:'Liberation Sans', sans-serif;transform:scaleX(0.9931);-webkit-text-stroke:0.3px #F1F2F4;">Kubernetes</div>
<div class="t" id="t72" style="left:2549.94px;top:1133.95px;font-size:29.00px;font-weight:400;color:#000;font-family:'Liberation Sans', sans-serif;transform:scaleX(1.0303);-webkit-text-stroke:0.3px #F1F2F4;">production</div>
<div class="t" id="t73" style="left:845.60px;top:1233.95px;font-size:29.00px;font-weight:400;color:#000;font-family:'Liberation Sans', sans-serif;transform:scaleX(0.9903);-webkit-text-stroke:0.3px #F1F2F4;">watermelon-022</div>
<div class="t" id="t74" style="left:843.74px;top:1280.20px;font-size:26.50px;font-weight:400;color:#626262;font-family:'Liberation Mono', monospace;transform:scaleX(0.9167);">6b4ccd5</div>
<div class="t" id="t75" style="left:1263.87px;top:1257.95px;font-size:29.00px;font-weight:400;color:#000;font-family:'Liberation Sans', sans-serif;transform:scaleX(0.9714);-webkit-text-stroke:0.3px #F1F2F4;">17.3.0</div>
<div class="t" id="t76" style="left:1557.30px;top:1257.95px;font-size:29.00px;font-weight:400;color:#000;font-family:'Liberation Sans', sans-serif;transform:scaleX(0.9604);-webkit-text-stroke:0.3px #F1F2F4;">Instance</div>
<div class="t" id="t77" style="left:2118.63px;top:1257.95px;font-size:29.00px;font-weight:400;color:#000;font-family:'Liberation Sans', sans-serif;transform:scaleX(0.9734);-webkit-text-stroke:0.3px #F1F2F4;">Systemd Unit Updater</div>
<div class="t" id="t78" style="left:2549.94px;top:1257.95px;font-size:29.00px;font-weight:400;color:#000;font-family:'Liberation Sans', sans-serif;transform:scaleX(1.0303);-webkit-text-stroke:0.3px #F1F2F4;">production</div>
<div class="t" id="t79" style="left:844.61px;top:1357.95px;font-size:29.00px;font-weight:400;color:#000;font-family:'Liberation Sans', sans-serif;transform:scaleX(0.9814);-webkit-text-stroke:0.3px #F1F2F4;">voco</div>
<div class="t" id="t80" style="left:843.76px;top:1404.20px;font-size:26.50px;font-weight:400;color:#626262;font-family:'Liberation Mono', monospace;transform:scaleX(0.9083);">f662d2a</div>
<div class="t" id="t81" style="left:1263.90px;top:1381.95px;font-size:29.00px;font-weight:400;color:#000;font-family:'Liberation Sans', sans-serif;transform:scaleX(0.9619);-webkit-text-stroke:0.3px #F1F2F4;">19.0.0-dev</div>
<div class="t" id="t82" style="left:1557.26px;top:1381.95px;font-size:29.00px;font-weight:400;color:#000;font-family:'Liberation Sans', sans-serif;transform:scaleX(0.9766);-webkit-text-stroke:0.3px #F1F2F4;">Bot Instance</div>
<div class="t" id="t83" style="left:2117.66px;top:1381.95px;font-size:29.00px;font-weight:400;color:#8E1A0C;font-family:'Liberation Sans', sans-serif;transform:scaleX(0.9712);-webkit-text-stroke:0.3px #F1F2F4;">None</div>
<div class="t" id="t84" style="left:1842.83px;top:1383.43px;font-size:25.00px;font-weight:700;color:#404040;font-family:'Liberation Sans', sans-serif;transform:scaleX(0.9515);">Services</div>
</body></html>
